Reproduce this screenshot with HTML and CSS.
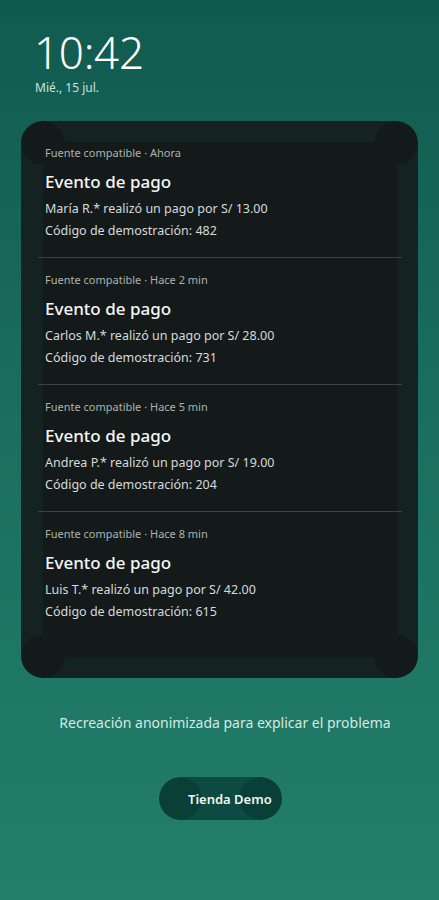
FILE: index.html
```html
<!DOCTYPE html>
<html lang="es">
<head>
<meta charset="utf-8">
<link rel="stylesheet" href="styles.css">
</head>
<body>
<div class="screen">
  <div class="clock">
    <div class="time">10:42</div>
    <div class="date">Mié., 15 jul.</div>
  </div>
  <div class="card">
    <div class="item">
      <div class="meta">Fuente compatible · Ahora</div>
      <div class="title">Evento de pago</div>
      <div class="body">María R.* realizó un pago por S/ 13.00</div>
      <div class="body">Código de demostración: 482</div>
    </div>
    <div class="item">
      <div class="meta">Fuente compatible · Hace 2 min</div>
      <div class="title">Evento de pago</div>
      <div class="body">Carlos M.* realizó un pago por S/ 28.00</div>
      <div class="body">Código de demostración: 731</div>
    </div>
    <div class="item">
      <div class="meta">Fuente compatible · Hace 5 min</div>
      <div class="title">Evento de pago</div>
      <div class="body">Andrea P.* realizó un pago por S/ 19.00</div>
      <div class="body">Código de demostración: 204</div>
    </div>
    <div class="item last">
      <div class="meta">Fuente compatible · Hace 8 min</div>
      <div class="title">Evento de pago</div>
      <div class="body">Luis T.* realizó un pago por S/ 42.00</div>
      <div class="body">Código de demostración: 615</div>
    </div>
  </div>
  <div class="caption">Recreación anonimizada para explicar el problema</div>
  <div class="btn-row"><div class="btn">Tienda Demo</div></div>
</div>
</body>
</html>
```
FILE: styles.css
```css
html, body {
  margin: 0;
  padding: 0;
}
body {
  width: 439px;
  height: 900px;
  overflow: hidden;
  background: linear-gradient(180deg, #115a4f 0%, #1a6e5f 45%, #237e6b 100%);
  font-family: "Noto Sans", "Open Sans", sans-serif;
  color: #fff;
}
.screen {
  display: flex;
  flex-direction: column;
}
.clock {
  padding: 29px 0 0 34px;
  height: 121px;
  box-sizing: border-box;
}
.time {
  font-size: 44px;
  font-weight: 300;
  line-height: 46px;
  letter-spacing: -0.3px;
}
.date {
  margin-top: 5px;
  font-size: 12px;
  line-height: 16px;
  color: #cfe0dc;
  padding-left: 1px;
}
.card {
  margin-left: 21px;
  width: 397px;
  height: 557px;
  box-sizing: border-box;
  border-radius: 22px;
  padding: 10px 16px 0 17px;
  background:
    radial-gradient(circle at 22px 22px, #131a1a 21.5px, transparent 22px),
    radial-gradient(circle at calc(100% - 22px) 22px, #131a1a 21.5px, transparent 22px),
    radial-gradient(circle at 22px calc(100% - 22px), #131a1a 21.5px, transparent 22px),
    radial-gradient(circle at calc(100% - 22px) calc(100% - 22px), #131a1a 21.5px, transparent 22px),
    linear-gradient(#141a1a, #141a1a) 22px 21px / calc(100% - 43px) calc(100% - 42px) no-repeat,
    #152222;
}
.item {
  padding: 14px 7px 15px 7px;
  border-bottom: 1px solid #3a4443;
}
.item.last {
  border-bottom: none;
}
.meta {
  font-size: 11px;
  line-height: 16px;
  color: #aab3b2;
}
.title {
  margin-top: 9px;
  font-size: 17px;
  font-weight: 500;
  line-height: 24px;
  color: #f5f7f7;
}
.body {
  font-size: 12.5px;
  line-height: 22px;
  color: #d5dbda;
}
.title + .body {
  margin-top: 4px;
}
.caption {
  margin-top: 35px;
  text-align: center;
  padding-left: 11px;
  font-size: 14px;
  line-height: 20px;
  color: #d6e8e3;
}
.btn-row {
  margin-top: 44px;
  display: flex;
  justify-content: center;
  padding-left: 2px;
}
.btn {
  width: 123px;
  height: 43px;
  box-sizing: border-box;
  border-radius: 22px;
  padding-left: 29px;
  display: flex;
  align-items: center;
  font-size: 13px;
  font-weight: 600;
  color: #f2f5f4;
  background:
    radial-gradient(circle at 21.5px 50%, #0a3f37 21px, transparent 21.5px),
    radial-gradient(circle at calc(100% - 21.5px) 50%, #0a3f37 21px, transparent 21.5px),
    #0d4a41;
}
```
